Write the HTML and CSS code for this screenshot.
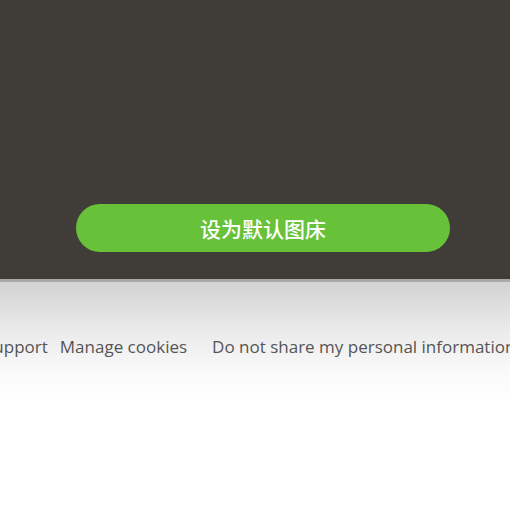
FILE: index.html
```html
<!DOCTYPE html>
<html lang="zh-CN">
<head>
<meta charset="utf-8">
<title>设为默认图床</title>
<link rel="stylesheet" href="styles.css">
</head>
<body>
  <section class="hero">
    <button class="primary-btn" type="button">设为默认图床</button>
  </section>
  <footer class="footer">
    <nav class="footer-links">
      <a class="footer-link first" href="#">Support</a>
      <a class="footer-link" href="#">Manage cookies</a>
      <a class="footer-link wide" href="#">Do not share my personal information</a>
    </nav>
  </footer>
</body>
</html>
```

FILE: styles.css
```css
html, body {
  margin: 0;
  padding: 0;
  background: #ffffff;
  overflow: hidden;
}

.hero {
  background: #403c38;
  height: 279px;
  display: flex;
  flex-direction: column;
  align-items: flex-start;
  padding-top: 204px;
  box-sizing: border-box;
}

.primary-btn {
  margin-left: 76px;
  width: 374px;
  height: 48px;
  border: none;
  border-radius: 24px;
  background: #67c23a;
  color: #ffffff;
  font-family: "Noto Sans CJK SC", "Microsoft YaHei", sans-serif;
  font-size: 21px;
  font-weight: 500;
  line-height: 46px;
  padding: 0;
  text-align: center;
}

.footer {
  border-top: 3px solid #a9a9a9;
  background: linear-gradient(#d2d2d2 0px, #ebebeb 50px, #fafafa 90px, #ffffff 120px);
  height: 232px;
  padding-top: 54px;
  box-sizing: border-box;
}

.footer-links {
  display: flex;
  white-space: nowrap;
  margin-left: -16px;
}

.footer-link {
  font-family: "Open Sans", "Noto Sans", sans-serif;
  font-size: 17px;
  line-height: 22px;
  color: #555555;
  text-decoration: none;
  margin-right: 14px;
}

.footer-link.first {
  margin-right: 12px;
}

.footer-link.wide {
  margin-left: 11px;
}
```
